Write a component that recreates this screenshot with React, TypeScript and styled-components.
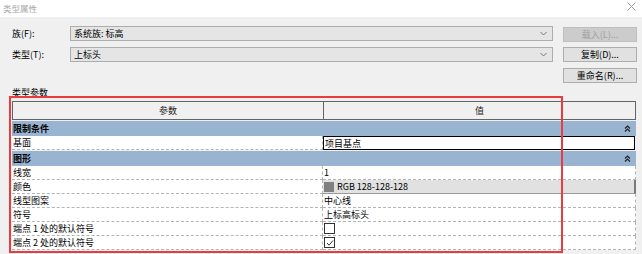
import React from "react";
import styled, { createGlobalStyle } from "styled-components";

const Global = createGlobalStyle`
  html, body { margin: 0; padding: 0; }
  body {
    width: 642px; height: 254px; overflow: hidden;
    background: #f0f0f0;
    font-family: "Noto Sans CJK SC", "Noto Sans", sans-serif;
    font-size: 9px; color: #000;
  }
`;

const Window = styled.div`
  position: relative;
  width: 642px;
  height: 254px;
  background: #f0f0f0;
`;

const TitleBar = styled.div`
  height: 17px;
  background: #fff;
  display: flex;
  align-items: center;
  justify-content: space-between;
  padding: 0 6px 0 3px;
  color: #a8a8a8;
  font-size: 8.5px;
  line-height: 17px;
`;

const CloseX = styled.svg`
  width: 9px;
  height: 9px;
  margin-top: -4px;
`;

const Top = styled.div`
  display: grid;
  grid-template-columns: 48px 1fr 74px;
  grid-template-rows: repeat(3, 15px);
  column-gap: 10px;
  row-gap: 6px;
  padding: 9px 5px 0 12px;
  align-items: center;
`;

const Label = styled.div`
  line-height: 15px;
`;

const Combo = styled.div`
  height: 13px;
  border: 1px solid #adadad;
  background: #e5e5e5;
  display: flex;
  align-items: center;
  justify-content: space-between;
  padding: 0 5px 0 3px;
  line-height: 13px;
`;

const Chevron = styled.svg`
  width: 7px;
  height: 5px;
`;

const Button = styled.div<{ $disabled?: boolean }>`
  height: 13px;
  border: 1px solid ${(p) => (p.$disabled ? "#bfbfbf" : "#adadad")};
  background: ${(p) => (p.$disabled ? "#cccccc" : "#e1e1e1")};
  color: ${(p) => (p.$disabled ? "#a0a0a0" : "#000")};
  display: flex;
  align-items: center;
  justify-content: center;
  line-height: 13px;
  margin-top: ${(p) => (p.$disabled ? "2px" : "0")};
`;

const SectionLabel = styled.div`
  padding: 3px 0 0 12px;
  height: 13px;
  line-height: 13px;
`;

const Table = styled.div`
  margin: 2px 0 0 12px;
  width: 624px;
  display: grid;
  grid-template-columns: 311px 313px;
`;

const HeadCell = styled.div<{ $first?: boolean }>`
  height: 17px;
  line-height: 17px;
  text-align: center;
  background: #f0f0f0;
  color: #222;
  border-top: 1px solid #646464;
  border-bottom: 1px solid #646464;
  border-left: 1px solid #646464;
  border-right: ${(p) => (p.$first ? "none" : "1px solid #646464")};
`;

const Group = styled.div`
  grid-column: 1 / span 2;
  height: 15px;
  line-height: 15px;
  margin-top: 1px;
  background: #99b4d1;
  font-weight: bold;
  padding: 0 5px 0 1px;
  display: flex;
  justify-content: space-between;
  align-items: center;
`;

const Collapse = styled.svg`
  width: 7px;
  height: 7px;
`;

const Cell = styled.div`
  height: 13px;
  line-height: 13px;
  background: #fff;
  border-bottom: 1px dashed #b4b4b4;
  border-right: 1px dashed #b4b4b4;
  padding-left: 1px;
  white-space: nowrap;
  display: flex;
  align-items: center;
  gap: 3px;
`;

const EditCell = styled(Cell)`
  border: 1px solid #000;
  height: 12px;
  margin-right: 1px;
`;

const ColorCell = styled(Cell)`
  background: #e1e1e1;
  border-right: 2px solid #7a7a7a;
  border-bottom: 1px solid #9a9a9a;
`;

const Swatch = styled.div`
  width: 10px;
  height: 10px;
  background: #808080;
`;

const Check = styled.div`
  width: 9px;
  height: 9px;
  border: 1px solid #333;
  background: #fff;
  display: flex;
  align-items: center;
  justify-content: center;
`;

const RedBox = styled.div`
  position: absolute;
  left: 9px;
  top: 96px;
  width: 550px;
  height: 153px;
  border: 2px solid #ec3a41;
  pointer-events: none;
`;

const Up = () => (
  <Collapse viewBox="0 0 7 7">
    <path d="M1 3.5L3.5 1L6 3.5M1 6.5L3.5 4L6 6.5" stroke="#222" fill="none" strokeWidth="1.2" />
  </Collapse>
);

const rows: { name: string; kind: string; value?: string }[] = [
  { name: "线宽", kind: "text", value: "1" },
  { name: "颜色", kind: "color", value: "RGB 128-128-128" },
  { name: "线型图案", kind: "text", value: "中心线" },
  { name: "符号", kind: "text", value: "上标高标头" },
  { name: "端点 1 处的默认符号", kind: "check" },
  { name: "端点 2 处的默认符号", kind: "checked" },
];

export default function App() {
  return (
    <Window>
      <Global />
      <TitleBar>
        <span>类型属性</span>
        <CloseX viewBox="0 0 9 9">
          <path d="M0.5 0.5L8.5 8.5M8.5 0.5L0.5 8.5" stroke="#9a9a9a" strokeWidth="1" />
        </CloseX>
      </TitleBar>
      <Top>
        <Label>族(F):</Label>
        <Combo>
          <span>系统族: 标高</span>
          <Chevron viewBox="0 0 7 5"><path d="M0.5 1L3.5 4L6.5 1" stroke="#777" fill="none" /></Chevron>
        </Combo>
        <Button $disabled>载入(L)...</Button>
        <Label>类型(T):</Label>
        <Combo>
          <span>上标头</span>
          <Chevron viewBox="0 0 7 5"><path d="M0.5 1L3.5 4L6.5 1" stroke="#777" fill="none" /></Chevron>
        </Combo>
        <Button>复制(D)...</Button>
        <div />
        <div />
        <Button>重命名(R)...</Button>
      </Top>
      <SectionLabel>类型参数</SectionLabel>
      <Table>
        <HeadCell $first>参数</HeadCell>
        <HeadCell>值</HeadCell>
        <Group>
          <span>限制条件</span>
          <Up />
        </Group>
        <Cell>基面</Cell>
        <EditCell>项目基点</EditCell>
        <Group>
          <span>图形</span>
          <Up />
        </Group>
        {rows.map((r) => (
          <React.Fragment key={r.name}>
            <Cell>{r.name}</Cell>
            {r.kind === "text" && <Cell>{r.value}</Cell>}
            {r.kind === "color" && (
              <ColorCell>
                <Swatch />
                <span>{r.value}</span>
              </ColorCell>
            )}
            {(r.kind === "check" || r.kind === "checked") && (
              <Cell>
                <Check>
                  {r.kind === "checked" && (
                    <svg width="8" height="8" viewBox="0 0 8 8">
                      <path d="M1 4L3 6.2L7 1.5" stroke="#333" fill="none" strokeWidth="1" />
                    </svg>
                  )}
                </Check>
              </Cell>
            )}
          </React.Fragment>
        ))}
      </Table>
      <RedBox />
    </Window>
  );
}
